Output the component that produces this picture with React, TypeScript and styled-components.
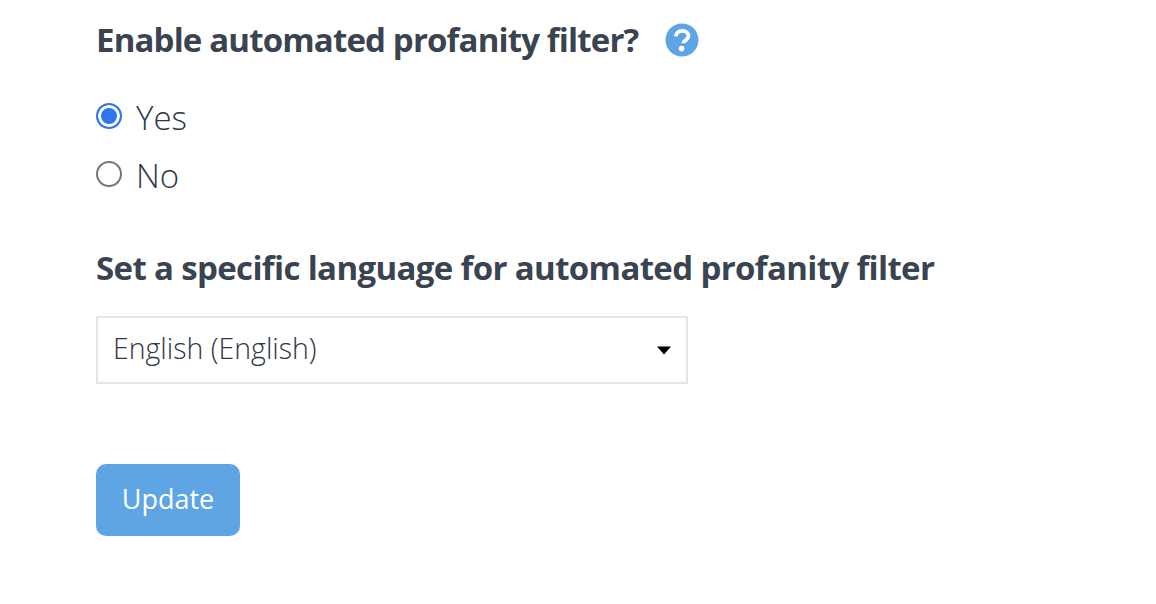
import styled, { createGlobalStyle } from 'styled-components'

const GlobalStyle = createGlobalStyle`
  html, body {
    margin: 0;
    padding: 0;
    background: #fff;
    font-family: 'Open Sans', 'Liberation Sans', sans-serif;
    color: #3b4450;
  }
`

const Page = styled.form`
  display: flex;
  flex-direction: column;
  align-items: flex-start;
  padding: 20px 0 0 96px;
`

const TitleRow = styled.div`
  display: flex;
  align-items: center;
  gap: 27px;
  height: 40px;
`

const Title = styled.h2<{ $top?: number; $spacing?: number }>`
  margin: ${({ $top }) => $top ?? 0}px 0 0;
  font-size: 33px;
  line-height: 40px;
  font-weight: 700;
  letter-spacing: ${({ $spacing }) => $spacing ?? 0}px;
  color: #3a4450;
`

const HelpIcon = styled.svg`
  width: 34px;
  height: 34px;
  display: block;
`

const Options = styled.div`
  display: flex;
  flex-direction: column;
  gap: 18px;
  margin-top: 38px;
`

const Option = styled.label`
  display: flex;
  align-items: center;
  gap: 14px;
  height: 40px;
  font-size: 33px;
  line-height: 40px;
  font-weight: 300;
  color: #2f3844;
`

const Radio = styled.span<{ $checked?: boolean }>`
  width: 26px;
  height: 26px;
  box-sizing: border-box;
  border-radius: 50%;
  border: 2px solid ${({ $checked }) => ($checked ? '#2f74f0' : '#767676')};
  background: ${({ $checked }) => ($checked ? '#2f74f0' : '#fff')};
  box-shadow: ${({ $checked }) => ($checked ? 'inset 0 0 0 3px #fff' : 'none')};
  margin-top: -5px;
`

const SelectBox = styled.div`
  display: flex;
  align-items: center;
  justify-content: space-between;
  box-sizing: border-box;
  width: 592px;
  height: 68px;
  margin-top: 28px;
  padding: 0 14px 4px 15px;
  border: 2px solid #e3e5e8;
  font-size: 28.5px;
  font-weight: 300;
  color: #2f3844;
`

const Caret = styled.svg`
  width: 16px;
  height: 10px;
  display: block;
  margin-top: 4px;
`

const Button = styled.button`
  width: 144px;
  height: 72px;
  margin-top: 80px;
  padding: 0 0 4px;
  border: 0;
  border-radius: 10px;
  background: #5fa5e3;
  color: #fff;
  font-family: inherit;
  font-size: 27px;
  font-weight: 400;
`

export default function App() {
  return (
    <>
      <GlobalStyle />
      <Page onSubmit={(e) => e.preventDefault()}>
        <TitleRow>
          <Title $spacing={-0.84}>Enable automated profanity filter?</Title>
          <HelpIcon viewBox="0 0 34 34">
            <circle cx="17" cy="17" r="16.5" fill="#5fa5e3" />
            <path
              d="M10.8 13.4c.2-3.4 2.7-5.6 6.4-5.6 3.6 0 6.2 2.1 6.2 5 0 2.2-1.2 3.4-2.9 4.5-1.5 1-2 1.5-2 2.9"
              fill="none"
              stroke="#fff"
              strokeWidth="3.8"
            />
            <circle cx="16.6" cy="25.6" r="2.8" fill="#fff" />
          </HelpIcon>
        </TitleRow>
        <Options>
          <Option>
            <Radio $checked />
            Yes
          </Option>
          <Option>
            <Radio />
            No
          </Option>
        </Options>
        <Title $top={52} $spacing={-0.64}>Set a specific language for automated profanity filter</Title>
        <SelectBox>
          English (English)
          <Caret viewBox="0 0 16 10">
            <path d="M1 1.5h14L8 9.5z" fill="#000" />
          </Caret>
        </SelectBox>
        <Button type="submit">Update</Button>
      </Page>
    </>
  )
}
